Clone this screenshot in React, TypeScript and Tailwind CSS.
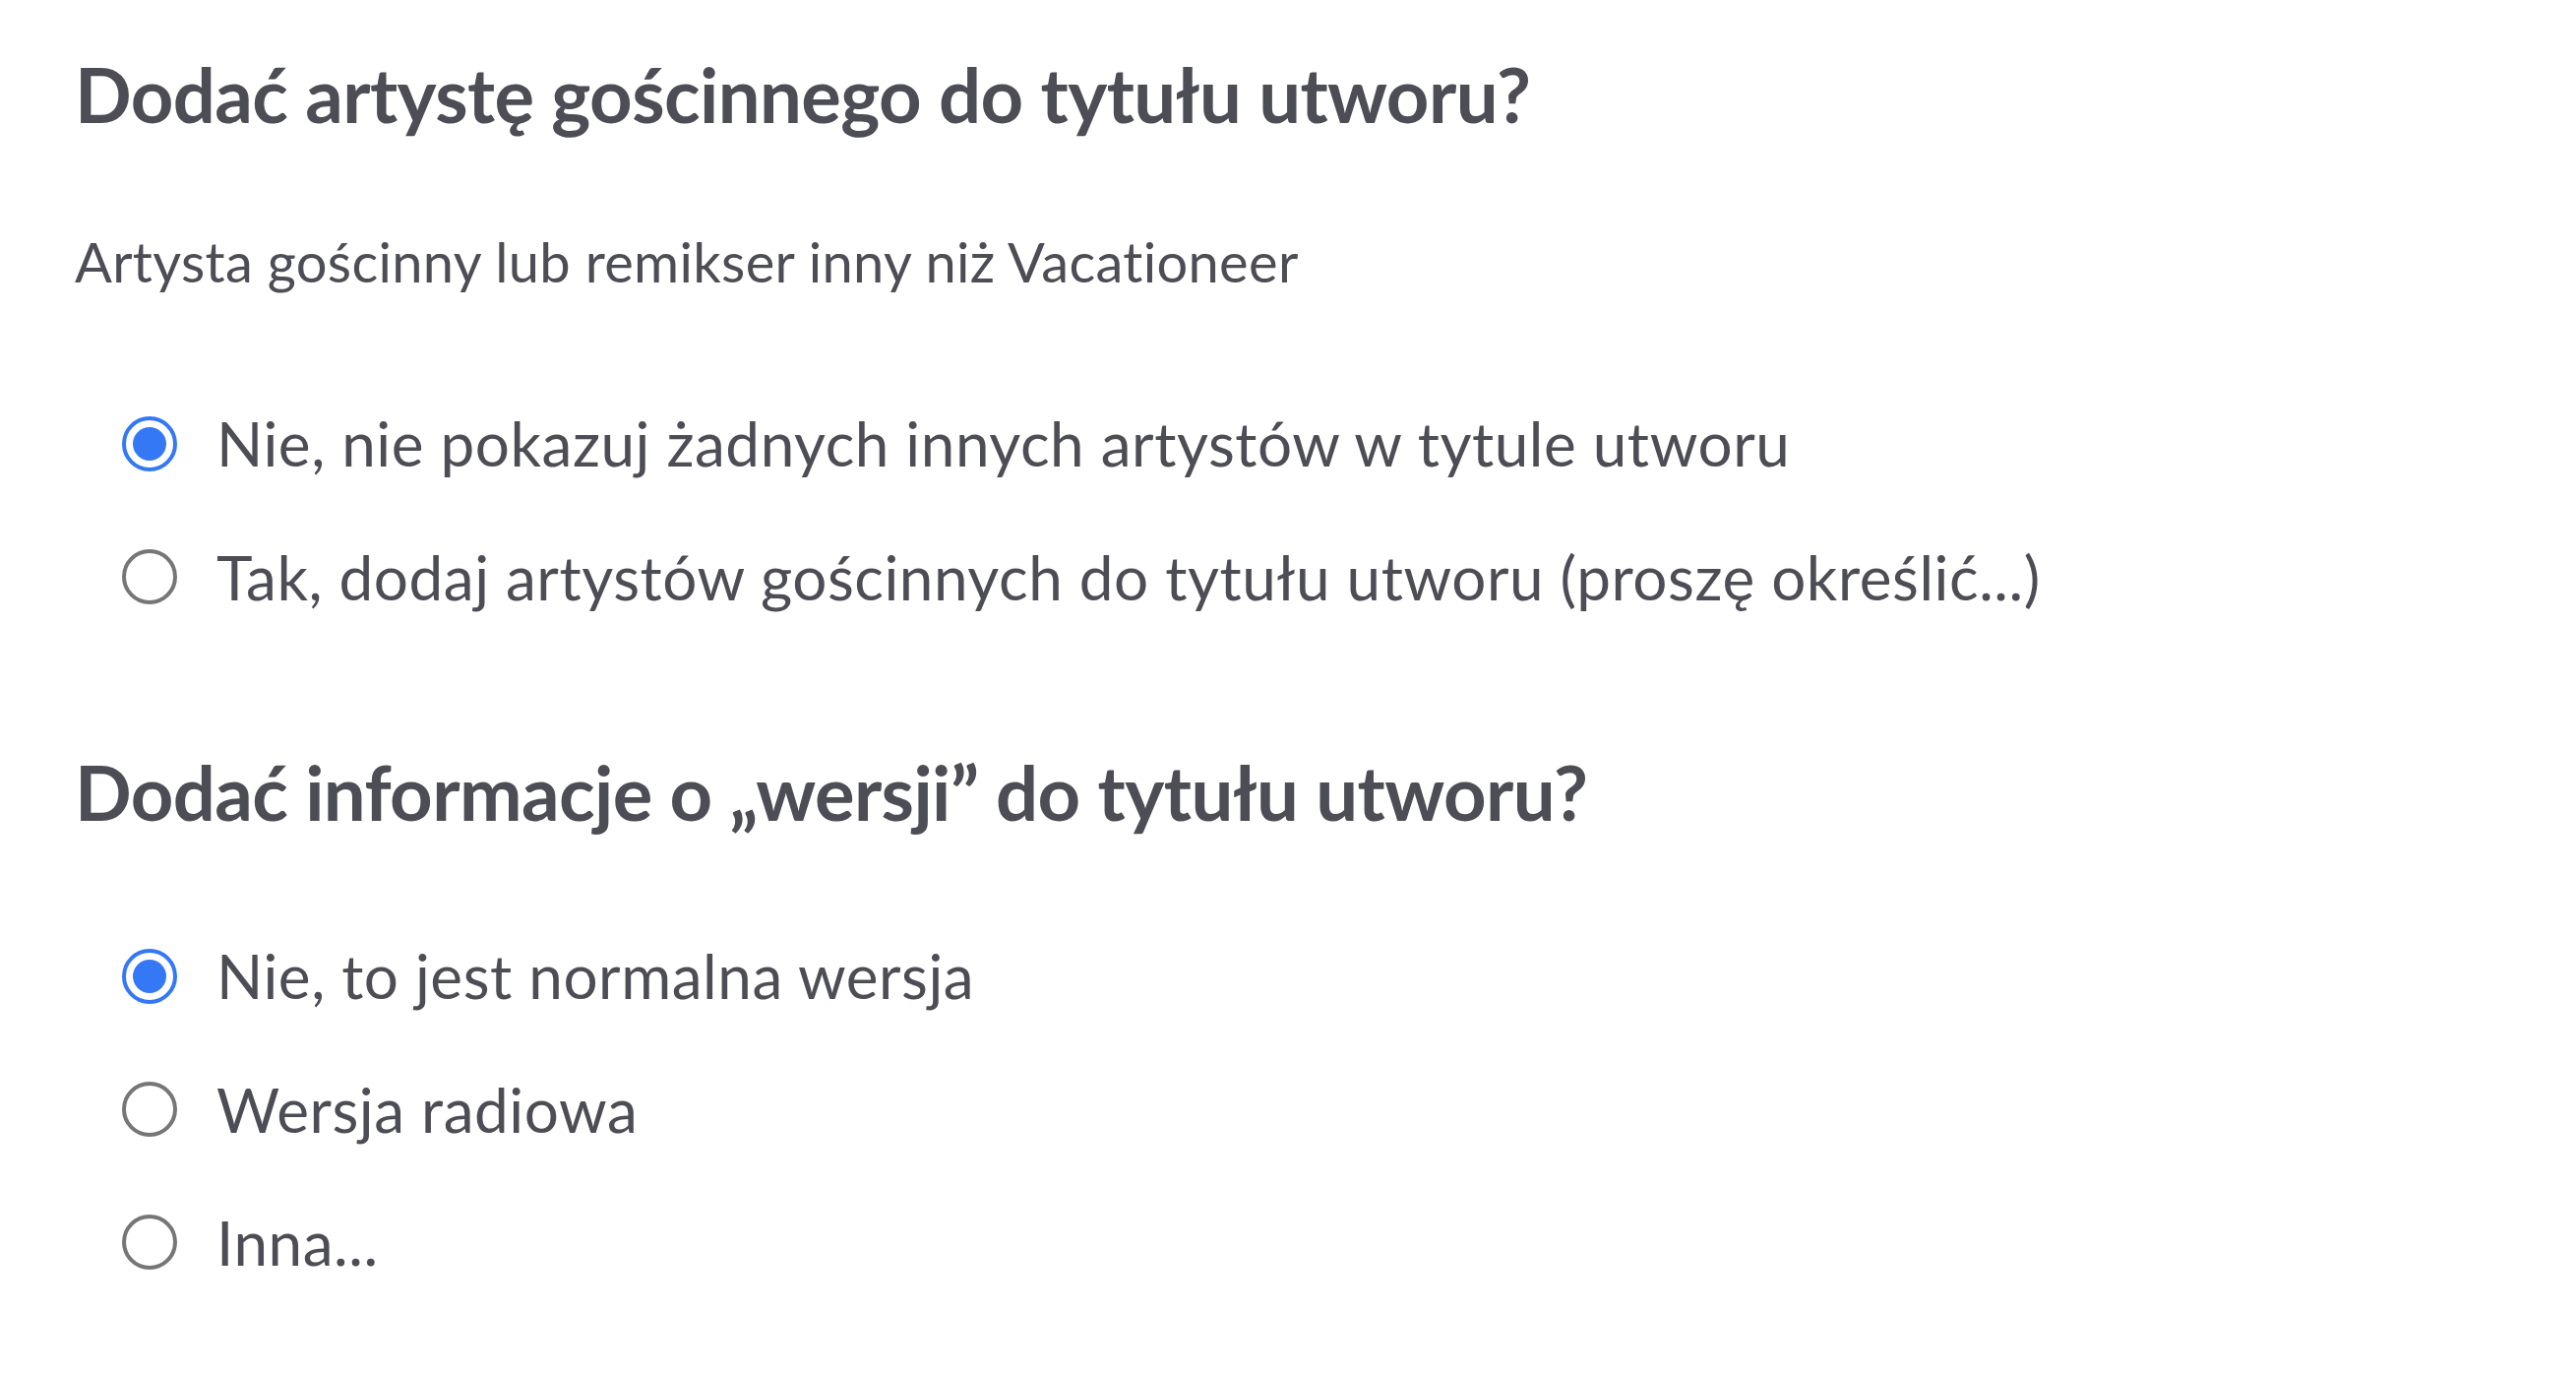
import { useState } from 'react';

interface RadioOption {
  id: string;
  label: string;
}

const guestOptions: RadioOption[] = [
  { id: 'no-guest', label: 'Nie, nie pokazuj żadnych innych artystów w tytule utworu' },
  { id: 'add-guest', label: 'Tak, dodaj artystów gościnnych do tytułu utworu (proszę określić...)' },
];

const versionOptions: RadioOption[] = [
  { id: 'normal', label: 'Nie, to jest normalna wersja' },
  { id: 'radio', label: 'Wersja radiowa' },
  { id: 'other', label: 'Inna...' },
];

const RadioDot = ({ checked }: { checked: boolean }) =>
  checked ? (
    <span className="flex h-[56px] w-[56px] shrink-0 items-center justify-center rounded-full border-[4.5px] border-[#3478f6] bg-white">
      <span className="h-[34px] w-[34px] rounded-full bg-[#3478f6]" />
    </span>
  ) : (
    <span className="h-[56px] w-[56px] shrink-0 rounded-full border-[4px] border-[#767676] bg-white" />
  );

interface RadioGroupProps {
  options: RadioOption[];
  value: string;
  onChange: (id: string) => void;
}

const RadioGroup = ({ options, value, onChange }: RadioGroupProps) => (
  <ul className="flex flex-col gap-[61px] pl-[48px]">
    {options.map((opt) => (
      <li
        key={opt.id}
        className="flex cursor-pointer items-center gap-[40px]"
        onClick={() => onChange(opt.id)}
      >
        <RadioDot checked={value === opt.id} />
        <span className="text-[62px] leading-[1.2] tracking-[0.55px]">{opt.label}</span>
      </li>
    ))}
  </ul>
);

export default function App() {
  const [guest, setGuest] = useState('no-guest');
  const [version, setVersion] = useState('normal');

  return (
    <div
      className="min-h-screen bg-white pl-[76px] pt-[50px] text-[#4d4d56]"
      style={{ fontFamily: 'Lato, "Noto Sans", sans-serif' }}
    >
      <h2 className="text-[76px] font-bold leading-[1.2] tracking-[-0.6px]">Dodać artystę gościnnego do tytułu utworu?</h2>
      <p className="mt-[91px] text-[56px] leading-[1.2] tracking-[0.33px]">Artysta gościnny lub remikser inny niż Vacationeer</p>

      <div className="mt-[114px]">
        <RadioGroup options={guestOptions} value={guest} onChange={setGuest} />
      </div>

      <h2 className="mt-[136px] text-[76px] font-bold leading-[1.2] tracking-[-0.6px]">Dodać informacje o „wersji” do tytułu utworu?</h2>

      <div className="mt-[104px]">
        <RadioGroup options={versionOptions} value={version} onChange={setVersion} />
      </div>
    </div>
  );
}
